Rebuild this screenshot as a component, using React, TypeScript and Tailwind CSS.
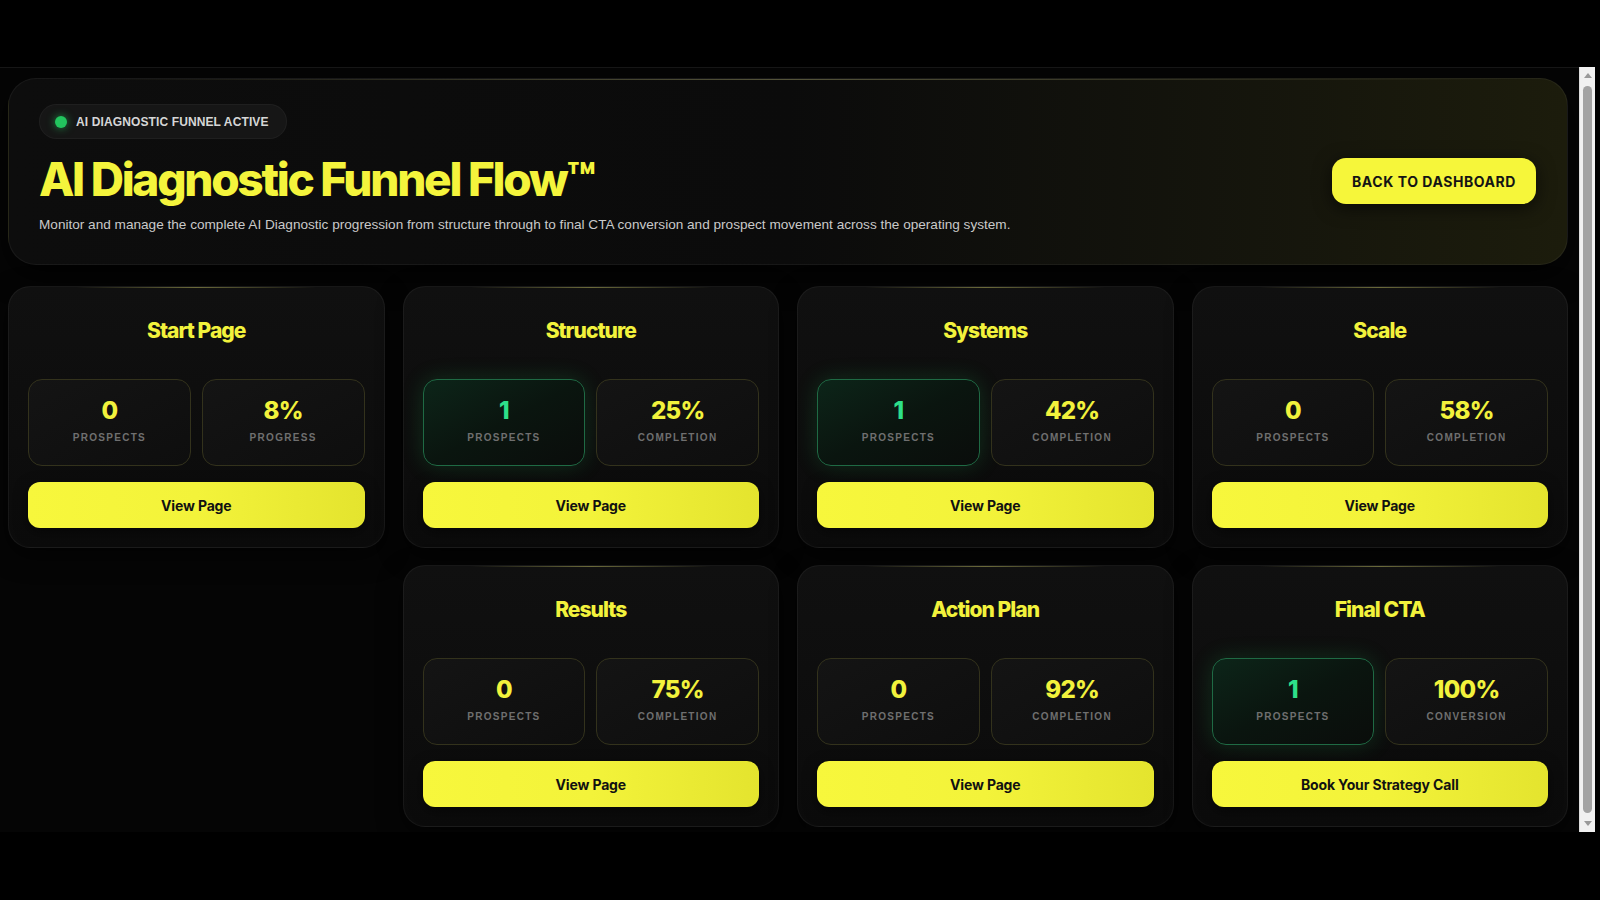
import React from 'react';

type Stage = {
  title: string;
  prospects: number;
  pct: string;
  label: string;
  active: boolean;
  cta?: string;
  colStart?: boolean;
};

const stages: Stage[] = [
  { title: 'Start Page', prospects: 0, pct: '8%', label: 'Progress', active: false },
  { title: 'Structure', prospects: 1, pct: '25%', label: 'Completion', active: true },
  { title: 'Systems', prospects: 1, pct: '42%', label: 'Completion', active: true },
  { title: 'Scale', prospects: 0, pct: '58%', label: 'Completion', active: false },
  { title: 'Results', prospects: 0, pct: '75%', label: 'Completion', active: false, colStart: true },
  { title: 'Action Plan', prospects: 0, pct: '92%', label: 'Completion', active: false },
  { title: 'Final CTA', prospects: 1, pct: '100%', label: 'Conversion', active: true, cta: 'Book Your Strategy Call' },
];

const heading = { fontFamily: 'Inter, "Noto Sans", sans-serif' };

const StatBox: React.FC<{ value: string | number; label: string; green?: boolean }> = ({ value, label, green }) => (
  <div
    className={
      green
        ? 'h-[87px] rounded-[14px] border border-[#1f6a44] bg-gradient-to-br from-[#0c2519] via-[#0a150f] to-[#0a0d0b] shadow-[0_0_22px_rgba(34,197,94,0.18)] flex flex-col items-center pt-[17px]'
        : 'h-[87px] rounded-[14px] border border-[#33321c] bg-gradient-to-br from-[#141414] to-[#0e0e0e] flex flex-col items-center pt-[17px]'
    }
  >
    <span
      style={heading}
      className={
        green
          ? 'text-[24px] leading-[28px] font-extrabold tracking-[-0.03em] text-[#2ee08a]'
          : 'text-[24px] leading-[28px] font-extrabold tracking-[-0.03em] text-[#f2f23c]'
      }
    >
      {value}
    </span>
    <span
      style={{ fontFamily: '"Liberation Sans", Arial, sans-serif' }}
      className="mt-[5px] text-[10px] font-bold uppercase tracking-[0.13em] text-[#6f6f6f]"
    >
      {label}
    </span>
  </div>
);

const StageCard: React.FC<{ stage: Stage }> = ({ stage }) => (
  <div
    className={
      'relative rounded-[22px] border border-white/[0.05] bg-gradient-to-b from-[#101010] to-[#0b0b0b] px-[19px] pt-[30px] pb-[19px] shadow-[0_8px_24px_rgba(0,0,0,0.6)] ' +
      (stage.colStart ? 'col-start-2' : '')
    }
  >
    <div className="absolute top-0 left-[18%] right-[18%] h-px bg-gradient-to-r from-transparent via-[#6b6a3a] to-transparent" />
    <h3 style={heading} className="text-center text-[21px] leading-[28px] font-extrabold tracking-[-0.045em] text-[#f2f23c]">
      {stage.title}
    </h3>
    <div className="mt-[34px] grid grid-cols-2 gap-[11px]">
      <StatBox value={stage.prospects} label="Prospects" green={stage.active} />
      <StatBox value={stage.pct} label={stage.label} />
    </div>
    <button
      style={heading}
      className="mt-[16px] w-full h-[46px] rounded-[12px] bg-gradient-to-r from-[#f7f73c] via-[#f3f33a] to-[#e4e42e] text-[14px] font-bold tracking-[-0.01em] text-[#111] shadow-[0_4px_14px_rgba(0,0,0,0.5)]"
    >
      {stage.cta || 'View Page'}
    </button>
  </div>
);

export default function App() {
  return (
    <div className="w-[1600px] h-[900px] bg-black overflow-hidden flex flex-col">
      <div className="h-[67px] shrink-0" />
      <div className="flex h-[765px]">
        <div className="w-[1579px] h-full bg-[#050505] border-t border-[#161616] pt-[10px] pl-[8px] pr-[11px] overflow-hidden">
          {/* header */}
          <div className="relative h-[187px] rounded-[28px] border border-white/[0.05] bg-gradient-to-r from-[#0d0d0d] via-[#0b0b0b] to-[#1c1c0c] pl-[30px] pr-[31px] pt-[25px] flex justify-between shadow-[0_10px_30px_rgba(0,0,0,0.7)]">
            <div className="absolute top-0 left-[4%] right-[4%] h-px bg-gradient-to-r from-transparent via-[#55543a] to-transparent" />
            <div className="flex flex-col items-start">
              <div className="h-[35px] rounded-full bg-[#161616] border border-white/[0.04] pl-[15px] pr-[17px] flex items-center gap-[9px]">
                <span className="w-[12px] h-[12px] rounded-full bg-[#22c55e] shadow-[0_0_8px_rgba(34,197,94,0.7)]" />
                <span
                  style={{ fontFamily: '"Liberation Sans", Arial, sans-serif' }}
                  className="text-[12px] font-bold uppercase tracking-[0.01em] text-[#d6d6d6]"
                >
                  AI Diagnostic Funnel Active
                </span>
              </div>
              <h1
                style={heading}
                className="mt-[13px] text-[46px] leading-[54px] font-extrabold tracking-[-0.05em] text-[#f4f43c]"
              >
                AI Diagnostic Funnel Flow™
              </h1>
              <p
                style={{ fontFamily: '"Liberation Sans", Arial, sans-serif' }}
                className="mt-[9px] text-[13.6px] leading-[20px] text-[#c9c9c9]"
              >
                Monitor and manage the complete AI Diagnostic progression from structure through to final CTA conversion and prospect movement across the operating system.
              </p>
            </div>
            <button
              style={heading}
              className="mt-[54px] h-[46px] w-[204px] rounded-[14px] bg-[#f6f63a] text-[14px] font-bold uppercase tracking-[0.04em] text-[#141414] shadow-[0_4px_18px_rgba(0,0,0,0.6)]"
            >
              Back to Dashboard
            </button>
          </div>

          {/* stages */}
          <div className="mt-[21px] grid grid-cols-4 gap-x-[18px] gap-y-[17px]">
            {stages.map((s) => (
              <StageCard key={s.title} stage={s} />
            ))}
          </div>
        </div>

        {/* scrollbar */}
        <div className="w-[16px] h-full bg-[#f1f1f1] border-l border-[#dcdcdc] flex flex-col items-center py-[4px]">
          <div className="w-0 h-0 border-l-[4px] border-r-[4px] border-b-[5px] border-l-transparent border-r-transparent border-b-[#9a9a9a] mt-[2px]" />
          <div className="mt-[8px] flex-1 w-[9px] rounded-full bg-[#a3a3a3]" />
          <div className="mt-[8px] w-0 h-0 border-l-[4px] border-r-[4px] border-t-[5px] border-l-transparent border-r-transparent border-t-[#9a9a9a] mb-[2px]" />
        </div>
        <div className="flex-1 bg-black" />
      </div>
    </div>
  );
}
